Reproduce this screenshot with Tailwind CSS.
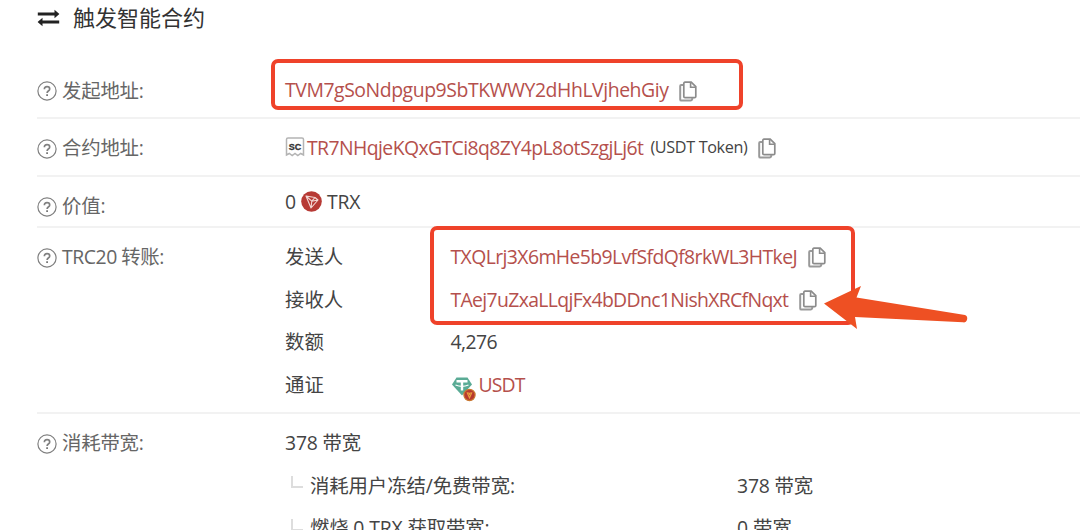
<!DOCTYPE html>
<html lang="zh-CN">
<head>
<meta charset="utf-8">
<title>触发智能合约</title>
<script src="https://cdn.jsdelivr.net/npm/@tailwindcss/browser@4"></script>
</head>
<body class="relative h-[530px] w-[1080px] overflow-hidden bg-white font-['Open_Sans','Noto_Sans_CJK_SC',sans-serif] text-[19.4px] whitespace-nowrap text-[#444]">
<svg class="hidden">
  <symbol id="help" viewBox="0 0 20 20"><circle cx="10" cy="10" r="9.1" fill="none" stroke="#808080" stroke-width="1.200"/><path d="M7.400 8.200Q7.300 5.700 10 5.700Q12.700 5.700 12.700 7.900Q12.700 9 11.300 10Q10.100 10.900 10.100 12" fill="none" stroke="#808080" stroke-width="1.700"/><path d="M9.200 13.200h1.800v1.700H9.200z" fill="#777"/></symbol>
  <symbol id="copy" viewBox="0 0 18 21"><path d="M4.600 4H2.200Q1.200 4 1.200 5V18.400q0 1.200 1.200 1.200H11.500q1.500 0 2-2.500" fill="none" stroke="#999" stroke-width="2"/><path d="M6 1.200H12.200L16.800 5.600V15.400Q16.800 16.600 15.600 16.600H6Q4.800 16.600 4.800 15.400V2.400Q4.800 1.200 6 1.200Z" fill="#fff" stroke="#8c8c8c" stroke-width="1.700"/><path d="M11.600 1.200V6.200H16.800" fill="none" stroke="#8c8c8c" stroke-width="1.600"/></symbol>
</svg>
<main class="ml-[37px]">
  <h1 class="flex h-[62px] items-start pt-[2px] text-[22px] leading-[30px] text-[#333]">
    <svg class="mt-[6px] mr-[13px] h-5 w-[23px]" viewBox="0 0 23 20"><path d="M.8 6H19M4 14H22.200" stroke="#222" stroke-width="2.800"/><path d="M17.500 1.800L22.400 6L17.500 10.200ZM5.500 9.800L.6 14L5.500 18.200Z" fill="#222"/></svg>
    <span>触发智能合约</span>
  </h1>
  <section class="flex h-[57px] items-center border-b-2 border-[#f2f2f2]">
    <div class="flex w-[248px] items-center pt-0.5 text-[#666]"><svg class="mt-0.5 mr-[5px] size-5"><use href="#help"/></svg><span class="tracking-[-0.2px]">发起地址:</span></div>
    <span class="tracking-[-0.43px] text-[#b5504c]">TVM7gSoNdpgup9SbTKWWY2dHhLVjhehGiy</span>
    <svg class="mt-[3px] ml-[11px] h-[21px] w-[18px]"><use href="#copy"/></svg>
  </section>
  <section class="flex h-[58px] items-center border-b-2 border-[#f2f2f2] pt-0.5">
    <div class="flex w-[248px] items-center text-[#666]"><svg class="mt-0.5 mr-[5px] size-5"><use href="#help"/></svg><span class="tracking-[-0.2px]">合约地址:</span></div>
    <svg class="-mt-0.5 mr-[2px] h-5 w-5" viewBox="0 0 20 20"><path d="M1.500 18V2.500Q1.500 1 3 1H17Q18.500 1 18.500 2.500V18L15.700 16.500L12.800 18.500L10 16.500L7.200 18.500L4.300 16.500Z" fill="#fff" stroke="#b4b4b4" stroke-width="1.500"/><text x="10" y="12.800" text-anchor="middle" font-family="Liberation Sans" font-size="9" font-weight="700" fill="#333" stroke="#333" stroke-width=".3">SC</text></svg>
    <span class="tracking-[-0.58px] text-[#b5504c]">TR7NHqjeKQxGTCi8q8ZY4pL8otSzgjLj6t</span>
    <span class="ml-[7px] -mt-0.5 text-[16.200px] tracking-[-0.350px]">(USDT Token)</span>
    <svg class="ml-[10px] h-[21px] w-[18px]"><use href="#copy"/></svg>
  </section>
  <section class="flex h-[51px] items-center border-b-2 border-[#f2f2f2]">
    <div class="flex w-[248px] items-center pt-[9px] text-[#666]"><svg class="mt-0.5 mr-[5px] size-5"><use href="#help"/></svg><span class="tracking-[-0.2px]">价值:</span></div>
    <span>0</span>
    <svg class="mx-[5px] size-[21px]" viewBox="0 0 21 21"><circle cx="10.500" cy="10.500" r="10.300" fill="#b73a35"/><path d="M5 5L14 6.500L17 9L10 17ZM5 5L10.800 10.200L14 6.500M10.800 10.200L17 9M10.800 10.200L10 17" fill="none" stroke="#f3d8d5" stroke-width="1.100" stroke-linejoin="round"/></svg>
    <span class="tracking-[-0.3px]">TRX</span>
  </section>
  <section class="flex h-[186px] border-b-2 border-[#f2f2f2] pt-[7px] leading-[43px]">
    <div class="flex h-[43px] w-[248px] items-center text-[#666]"><svg class="mt-0.5 mr-[5px] size-5"><use href="#help"/></svg><span class="tracking-[-0.450px]">TRC20 转账:</span></div>
    <div class="grid auto-rows-[42.700px] grid-cols-[165.500px_1fr]">
      <span>发送人</span>
      <div class="flex items-center"><span class="tracking-[-0.600px] text-[#b5504c]">TXQLrj3X6mHe5b9LvfSfdQf8rkWL3HTkeJ</span><svg class="mt-[3px] ml-[10.500px] h-[21px] w-[18px]"><use href="#copy"/></svg></div>
      <span>接收人</span>
      <div class="flex items-center"><span class="tracking-[-0.660px] text-[#b5504c]">TAej7uZxaLLqjFx4bDDnc1NishXRCfNqxt</span><svg class="mt-[3px] ml-[11px] h-[21px] w-[18px]"><use href="#copy"/></svg></div>
      <span>数额</span><span class="tracking-[-0.6px]">4,276</span>
      <span>通证</span>
      <div class="flex items-center"><svg class="mt-[10px] mr-[3px] h-[26px] w-[25px]" viewBox="0 0 25 26"><path d="M5.500 1.500H16.500L21 8.500L11 19.500L1 8.500Z" fill="#5aab95"/><path d="M5.500 4H16.500V6.400H12.200V14.500H9.800V6.400H5.500Z" fill="#fff"/><path d="M4.500 9Q11 11.800 17.500 9" fill="none" stroke="#fff" stroke-width="1.100"/><circle cx="18.500" cy="19" r="5.600" fill="#b8382f" stroke="#c9772f" stroke-width="1.200"/><path d="M16 16.300L18.500 22L21 16.300M17.500 16.500l1 2 1-2" fill="none" stroke="#e9a23d" stroke-width="1.100"/></svg><span class="tracking-[-0.850px] text-[#b5504c]">USDT</span></div>
    </div>
  </section>
  <section class="flex pt-[7px] leading-[43px]">
    <div class="flex h-[43px] w-[248px] items-center text-[#666]"><svg class="mt-0.5 mr-[5px] size-5"><use href="#help"/></svg><span class="tracking-[-0.2px]">消耗带宽:</span></div>
    <div class="grid auto-rows-[42.700px] grid-cols-[452px_1fr]">
      <span class="col-span-2 tracking-[-0.2px]">378 带宽</span>
      <div class="flex items-center pl-[6px]"><i class="mr-[7px] mb-[6px] h-[12px] w-[12px] border-b-2 border-l-2 border-[#ddd]"></i><span class="tracking-[-0.1px]">消耗用户冻结/免费带宽:</span></div><span class="tracking-[-0.2px]">378 带宽</span>
      <div class="flex items-center pl-[6px]"><i class="mr-[7px] mb-[6px] h-[12px] w-[12px] border-b-2 border-l-2 border-[#ddd]"></i><span class="tracking-[-0.150px]">燃烧 0 TRX 获取带宽:</span></div><span>0 带宽</span>
    </div>
  </section>
</main>
<div class="absolute top-[59px] left-[271px] h-[51px] w-[472px] rounded-[7px] border-4 border-[#ef422a]"></div>
<div class="absolute top-[226px] left-[430px] h-[99px] w-[425px] rounded-[7px] border-4 border-[#ef422a]"></div>
<svg class="absolute top-0 left-0 h-[530px] w-[1080px]" viewBox="0 0 1080 530"><path d="M824 303.500L861 286L856.500 297.500L965 315Q968 316 967 320Q966 323 963 322.300L855 317L857 329Z" fill="#ee5023"/></svg>
</body>
</html>
